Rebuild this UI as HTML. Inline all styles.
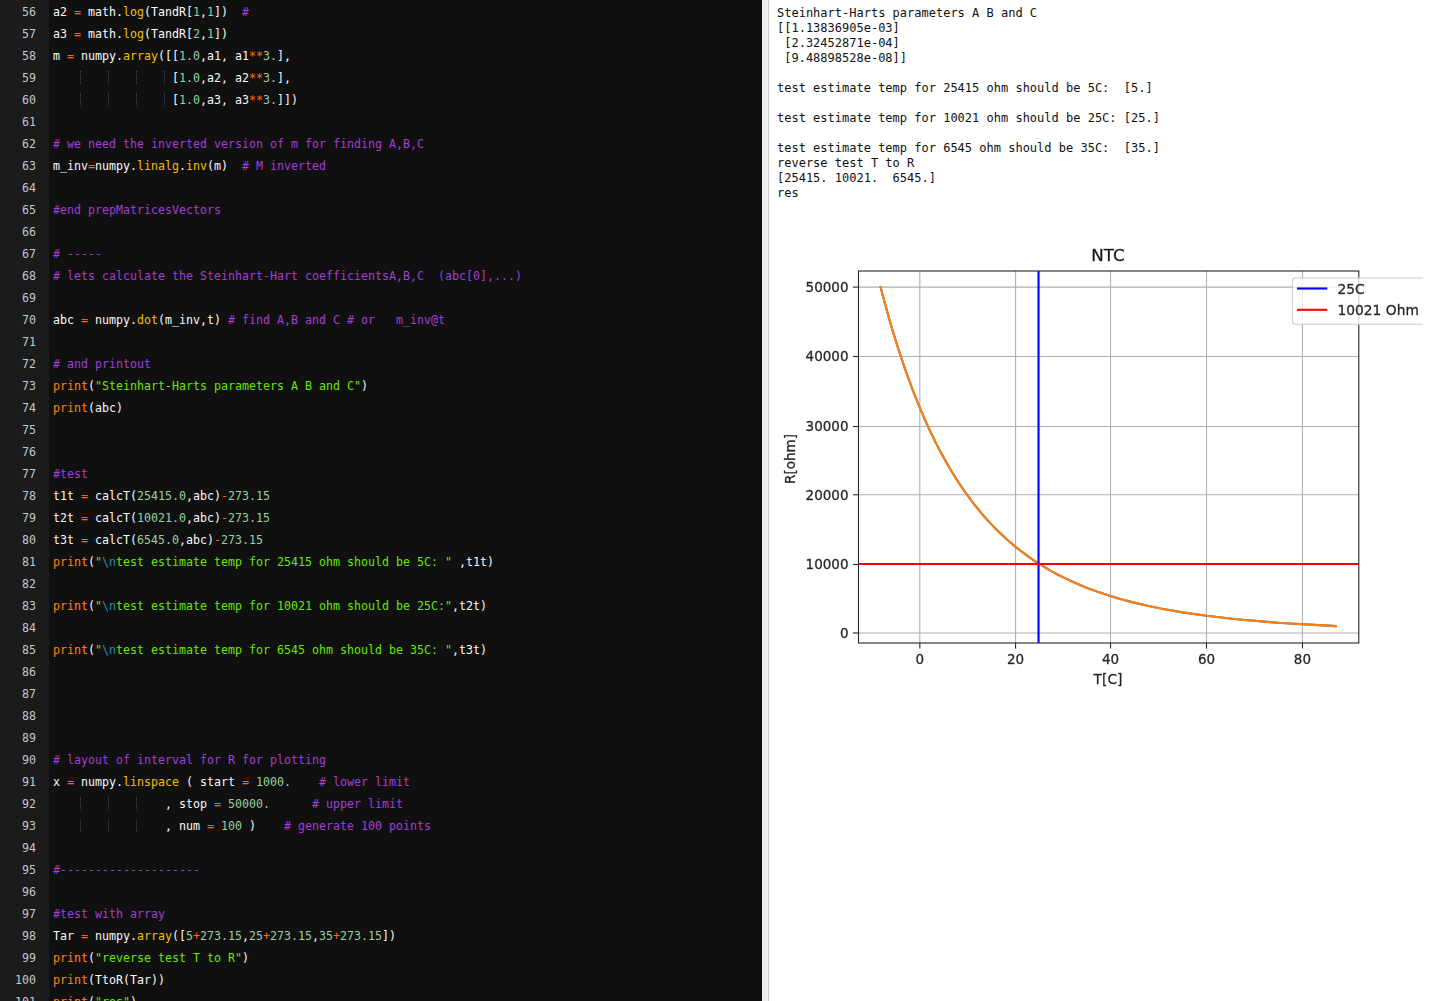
<!DOCTYPE html>
<html lang="en"><head><meta charset="utf-8"><title>NTC</title>
<style>
html,body{margin:0;padding:0;}
body{width:1436px;height:1001px;overflow:hidden;position:relative;background:#fff;}
#left{position:absolute;left:0;top:0;width:762px;height:1001px;background:#101010;overflow:hidden;}
#gutter{position:absolute;left:0;top:0;width:49px;height:1001px;background:#1b1b1b;}
#code{position:absolute;left:0;top:1px;}
.ln{position:relative;height:22px;line-height:22px;white-space:pre;color:#fafafa;}
.no{position:absolute;left:0;top:0;width:40.2px;text-align:right;color:#c6c6c6;font:13px/22px "DejaVu Sans Mono","Liberation Mono",monospace;transform:scaleX(0.8945);transform-origin:0 0;}
.tx{position:absolute;left:53px;top:0;font:13px/22px "DejaVu Sans Mono","Liberation Mono",monospace;transform:scaleX(0.8945);transform-origin:0 0;}

.g{position:absolute;top:4px;width:1px;height:13px;background:repeating-linear-gradient(to bottom,#46445c 0,#46445c 1px,transparent 1px,transparent 2px);}
.c{color:#a23fd6;} .s{color:#6ae60e;} .e{color:#2f8fa3;} .m{color:#f0c206;} .k{color:#ff8414;} .n{color:#98cfa0;} .o{color:#ff6a00;}
#split{position:absolute;left:762px;top:0;width:6px;height:1001px;background:#efefef;border-right:1px solid #cfcfcf;}
#out{position:absolute;left:777px;top:6px;margin:0;font:12px/15px "DejaVu Sans Mono","Liberation Mono",monospace;color:#111;white-space:pre;}
.plot{position:absolute;left:769px;top:0;will-change:transform;}
.plot text{stroke:#262626;stroke-width:.35px;stroke-opacity:.8;}
</style></head><body>
<div id="left"><div id="gutter"></div><div id="code">
<div class="ln"><span class="no">56</span><span class="tx">a2 <span class="o">=</span> math.<span class="m">log</span>(TandR[<span class="n">1</span>,<span class="n">1</span>])  <span class="c">#</span></span></div>
<div class="ln"><span class="no">57</span><span class="tx">a3 <span class="o">=</span> math.<span class="m">log</span>(TandR[<span class="n">2</span>,<span class="n">1</span>])</span></div>
<div class="ln"><span class="no">58</span><span class="tx">m <span class="o">=</span> numpy.<span class="m">array</span>([[<span class="n">1.0</span>,a1, a1<span class="o">**</span><span class="n">3.</span>],</span></div>
<div class="ln"><span class="no">59</span><i class="g" style="left:80px"></i><i class="g" style="left:108px"></i><i class="g" style="left:136px"></i><i class="g" style="left:164px"></i><span class="tx">                 [<span class="n">1.0</span>,a2, a2<span class="o">**</span><span class="n">3.</span>],</span></div>
<div class="ln"><span class="no">60</span><i class="g" style="left:80px"></i><i class="g" style="left:108px"></i><i class="g" style="left:136px"></i><i class="g" style="left:164px"></i><span class="tx">                 [<span class="n">1.0</span>,a3, a3<span class="o">**</span><span class="n">3.</span>]])</span></div>
<div class="ln"><span class="no">61</span><span class="tx"></span></div>
<div class="ln"><span class="no">62</span><span class="tx"><span class="c"># we need the inverted version of m for finding A,B,C</span></span></div>
<div class="ln"><span class="no">63</span><span class="tx">m_inv<span class="o">=</span>numpy.<span class="m">linalg</span>.<span class="m">inv</span>(m)  <span class="c"># M inverted</span></span></div>
<div class="ln"><span class="no">64</span><span class="tx"></span></div>
<div class="ln"><span class="no">65</span><span class="tx"><span class="c">#end prepMatricesVectors</span></span></div>
<div class="ln"><span class="no">66</span><span class="tx"></span></div>
<div class="ln"><span class="no">67</span><span class="tx"><span class="c"># -----</span></span></div>
<div class="ln"><span class="no">68</span><span class="tx"><span class="c"># lets calculate the Steinhart-Hart coefficientsA,B,C  (abc[0],...)</span></span></div>
<div class="ln"><span class="no">69</span><span class="tx"></span></div>
<div class="ln"><span class="no">70</span><span class="tx">abc <span class="o">=</span> numpy.<span class="m">dot</span>(m_inv,t) <span class="c"># find A,B and C # or   m_inv@t</span></span></div>
<div class="ln"><span class="no">71</span><span class="tx"></span></div>
<div class="ln"><span class="no">72</span><span class="tx"><span class="c"># and printout</span></span></div>
<div class="ln"><span class="no">73</span><span class="tx"><span class="k">print</span>(<span class="s">"Steinhart-Harts parameters A B and C"</span>)</span></div>
<div class="ln"><span class="no">74</span><span class="tx"><span class="k">print</span>(abc)</span></div>
<div class="ln"><span class="no">75</span><span class="tx"></span></div>
<div class="ln"><span class="no">76</span><span class="tx"></span></div>
<div class="ln"><span class="no">77</span><span class="tx"><span class="c">#test</span></span></div>
<div class="ln"><span class="no">78</span><span class="tx">t1t <span class="o">=</span> calcT(<span class="n">25415.0</span>,abc)<span class="o">-</span><span class="n">273.15</span></span></div>
<div class="ln"><span class="no">79</span><span class="tx">t2t <span class="o">=</span> calcT(<span class="n">10021.0</span>,abc)<span class="o">-</span><span class="n">273.15</span></span></div>
<div class="ln"><span class="no">80</span><span class="tx">t3t <span class="o">=</span> calcT(<span class="n">6545.0</span>,abc)<span class="o">-</span><span class="n">273.15</span></span></div>
<div class="ln"><span class="no">81</span><span class="tx"><span class="k">print</span>(<span class="s">"<span class="e">\n</span>test estimate temp for 25415 ohm should be 5C: "</span> ,t1t)</span></div>
<div class="ln"><span class="no">82</span><span class="tx"></span></div>
<div class="ln"><span class="no">83</span><span class="tx"><span class="k">print</span>(<span class="s">"<span class="e">\n</span>test estimate temp for 10021 ohm should be 25C:"</span>,t2t)</span></div>
<div class="ln"><span class="no">84</span><span class="tx"></span></div>
<div class="ln"><span class="no">85</span><span class="tx"><span class="k">print</span>(<span class="s">"<span class="e">\n</span>test estimate temp for 6545 ohm should be 35C: "</span>,t3t)</span></div>
<div class="ln"><span class="no">86</span><span class="tx"></span></div>
<div class="ln"><span class="no">87</span><span class="tx"></span></div>
<div class="ln"><span class="no">88</span><span class="tx"></span></div>
<div class="ln"><span class="no">89</span><span class="tx"></span></div>
<div class="ln"><span class="no">90</span><span class="tx"><span class="c"># layout of interval for R for plotting</span></span></div>
<div class="ln"><span class="no">91</span><span class="tx">x <span class="o">=</span> numpy.<span class="m">linspace</span> ( start <span class="o">=</span> <span class="n">1000.</span>    <span class="c"># lower limit</span></span></div>
<div class="ln"><span class="no">92</span><i class="g" style="left:80px"></i><i class="g" style="left:108px"></i><i class="g" style="left:136px"></i><span class="tx">                , stop <span class="o">=</span> <span class="n">50000.</span>      <span class="c"># upper limit</span></span></div>
<div class="ln"><span class="no">93</span><i class="g" style="left:80px"></i><i class="g" style="left:108px"></i><i class="g" style="left:136px"></i><span class="tx">                , num <span class="o">=</span> <span class="n">100</span> )    <span class="c"># generate 100 points</span></span></div>
<div class="ln"><span class="no">94</span><span class="tx"></span></div>
<div class="ln"><span class="no">95</span><span class="tx"><span class="c">#--------------------</span></span></div>
<div class="ln"><span class="no">96</span><span class="tx"></span></div>
<div class="ln"><span class="no">97</span><span class="tx"><span class="c">#test with array</span></span></div>
<div class="ln"><span class="no">98</span><span class="tx">Tar <span class="o">=</span> numpy.<span class="m">array</span>([<span class="n">5</span><span class="o">+</span><span class="n">273.15</span>,<span class="n">25</span><span class="o">+</span><span class="n">273.15</span>,<span class="n">35</span><span class="o">+</span><span class="n">273.15</span>])</span></div>
<div class="ln"><span class="no">99</span><span class="tx"><span class="k">print</span>(<span class="s">"reverse test T to R"</span>)</span></div>
<div class="ln"><span class="no">100</span><span class="tx"><span class="k">print</span>(TtoR(Tar))</span></div>
<div class="ln"><span class="no">101</span><span class="tx"><span class="k">print</span>(<span class="s">"res"</span>)</span></div>
</div></div>
<div id="split"></div>
<pre id="out">Steinhart-Harts parameters A B and C
[[1.13836905e-03]
 [2.32452871e-04]
 [9.48898528e-08]]

test estimate temp for 25415 ohm should be 5C:  [5.]

test estimate temp for 10021 ohm should be 25C: [25.]

test estimate temp for 6545 ohm should be 35C:  [35.]
reverse test T to R
[25415. 10021.  6545.]
res</pre>
<svg class="plot" width="667" height="1001" viewBox="769 0 667 1001">
<g font-family="'DejaVu Sans', 'Liberation Sans', sans-serif" fill="#262626">
<g stroke="#b0b0b0" stroke-width="1.1"><line x1="919.83" x2="919.83" y1="271.0" y2="643.0"/><line x1="1015.58" x2="1015.58" y1="271.0" y2="643.0"/><line x1="1110.52" x2="1110.52" y1="271.0" y2="643.0"/><line x1="1206.49" x2="1206.49" y1="271.0" y2="643.0"/><line x1="1302.46" x2="1302.46" y1="271.0" y2="643.0"/><line x1="858.5" x2="1358.8" y1="633.00" y2="633.00"/><line x1="858.5" x2="1358.8" y1="564.50" y2="564.50"/><line x1="858.5" x2="1358.8" y1="494.75" y2="494.75"/><line x1="858.5" x2="1358.8" y1="426.50" y2="426.50"/><line x1="858.5" x2="1358.8" y1="356.50" y2="356.50"/><line x1="858.5" x2="1358.8" y1="287.10" y2="287.10"/></g>
<path d="M1335.83 626.08 L1276.42 622.66 L1236.37 619.23 L1206.44 615.81 L1182.70 612.39 L1163.10 608.96 L1146.46 605.54 L1132.04 602.11 L1119.34 598.69 L1108.01 595.27 L1097.79 591.84 L1088.50 588.42 L1079.99 584.99 L1072.14 581.57 L1064.86 578.15 L1058.08 574.72 L1051.74 571.30 L1045.78 567.87 L1040.17 564.45 L1034.87 561.02 L1029.85 557.60 L1025.08 554.18 L1020.54 550.75 L1016.20 547.33 L1012.06 543.90 L1008.10 540.48 L1004.29 537.06 L1000.64 533.63 L997.13 530.21 L993.74 526.78 L990.48 523.36 L987.33 519.94 L984.29 516.51 L981.34 513.09 L978.49 509.66 L975.73 506.24 L973.04 502.82 L970.44 499.39 L967.91 495.97 L965.45 492.54 L963.06 489.12 L960.73 485.70 L958.47 482.27 L956.25 478.85 L954.10 475.42 L951.99 472.00 L949.94 468.58 L947.93 465.15 L945.97 461.73 L944.05 458.30 L942.17 454.88 L940.34 451.45 L938.54 448.03 L936.78 444.61 L935.05 441.18 L933.36 437.76 L931.70 434.33 L930.08 430.91 L928.48 427.49 L926.92 424.06 L925.38 420.64 L923.87 417.21 L922.38 413.79 L920.93 410.37 L919.49 406.94 L918.09 403.52 L916.70 400.09 L915.34 396.67 L914.00 393.25 L912.68 389.82 L911.38 386.40 L910.10 382.97 L908.84 379.55 L907.60 376.13 L906.38 372.70 L905.18 369.28 L903.99 365.85 L902.82 362.43 L901.67 359.01 L900.53 355.58 L899.41 352.16 L898.30 348.73 L897.21 345.31 L896.13 341.88 L895.07 338.46 L894.02 335.04 L892.98 331.61 L891.96 328.19 L890.95 324.76 L889.95 321.34 L888.97 317.92 L887.99 314.49 L887.03 311.07 L886.08 307.64 L885.14 304.22 L884.21 300.80 L883.30 297.37 L882.39 293.95 L881.49 290.52 L880.60 287.10" fill="none" stroke="#1f77b4" stroke-width="2.1" stroke-linecap="square"/>
<path d="M1335.83 626.08 L1276.42 622.66 L1236.37 619.23 L1206.44 615.81 L1182.70 612.39 L1163.10 608.96 L1146.46 605.54 L1132.04 602.11 L1119.34 598.69 L1108.01 595.27 L1097.79 591.84 L1088.50 588.42 L1079.99 584.99 L1072.14 581.57 L1064.86 578.15 L1058.08 574.72 L1051.74 571.30 L1045.78 567.87 L1040.17 564.45 L1034.87 561.02 L1029.85 557.60 L1025.08 554.18 L1020.54 550.75 L1016.20 547.33 L1012.06 543.90 L1008.10 540.48 L1004.29 537.06 L1000.64 533.63 L997.13 530.21 L993.74 526.78 L990.48 523.36 L987.33 519.94 L984.29 516.51 L981.34 513.09 L978.49 509.66 L975.73 506.24 L973.04 502.82 L970.44 499.39 L967.91 495.97 L965.45 492.54 L963.06 489.12 L960.73 485.70 L958.47 482.27 L956.25 478.85 L954.10 475.42 L951.99 472.00 L949.94 468.58 L947.93 465.15 L945.97 461.73 L944.05 458.30 L942.17 454.88 L940.34 451.45 L938.54 448.03 L936.78 444.61 L935.05 441.18 L933.36 437.76 L931.70 434.33 L930.08 430.91 L928.48 427.49 L926.92 424.06 L925.38 420.64 L923.87 417.21 L922.38 413.79 L920.93 410.37 L919.49 406.94 L918.09 403.52 L916.70 400.09 L915.34 396.67 L914.00 393.25 L912.68 389.82 L911.38 386.40 L910.10 382.97 L908.84 379.55 L907.60 376.13 L906.38 372.70 L905.18 369.28 L903.99 365.85 L902.82 362.43 L901.67 359.01 L900.53 355.58 L899.41 352.16 L898.30 348.73 L897.21 345.31 L896.13 341.88 L895.07 338.46 L894.02 335.04 L892.98 331.61 L891.96 328.19 L890.95 324.76 L889.95 321.34 L888.97 317.92 L887.99 314.49 L887.03 311.07 L886.08 307.64 L885.14 304.22 L884.21 300.80 L883.30 297.37 L882.39 293.95 L881.49 290.52 L880.60 287.10" fill="none" stroke="#ff7f0e" stroke-width="2.1" stroke-linecap="square"/>
<line x1="1038.55" x2="1038.55" y1="271.0" y2="643.0" stroke="#0000ff" stroke-width="2.1"/>
<line x1="858.5" x2="1358.8" y1="563.95" y2="563.95" stroke="#ff0000" stroke-width="2.1"/>
<g stroke="#262626" stroke-width="1.1"><line x1="919.83" x2="919.83" y1="643.0" y2="648.5"/><line x1="1015.58" x2="1015.58" y1="643.0" y2="648.5"/><line x1="1110.52" x2="1110.52" y1="643.0" y2="648.5"/><line x1="1206.49" x2="1206.49" y1="643.0" y2="648.5"/><line x1="1302.46" x2="1302.46" y1="643.0" y2="648.5"/><line x1="853.0" x2="858.5" y1="633.00" y2="633.00"/><line x1="853.0" x2="858.5" y1="564.50" y2="564.50"/><line x1="853.0" x2="858.5" y1="494.75" y2="494.75"/><line x1="853.0" x2="858.5" y1="426.50" y2="426.50"/><line x1="853.0" x2="858.5" y1="356.50" y2="356.50"/><line x1="853.0" x2="858.5" y1="287.10" y2="287.10"/></g>
<rect x="858.5" y="271.0" width="500.30" height="372.00" fill="none" stroke="#262626" stroke-width="1.1"/>
<text x="919.83" y="664" font-size="13.5" text-anchor="middle">0</text>
<text x="1015.58" y="664" font-size="13.5" text-anchor="middle">20</text>
<text x="1110.52" y="664" font-size="13.5" text-anchor="middle">40</text>
<text x="1206.49" y="664" font-size="13.5" text-anchor="middle">60</text>
<text x="1302.46" y="664" font-size="13.5" text-anchor="middle">80</text>
<text x="848.5" y="638.10" font-size="13.5" text-anchor="end">0</text>
<text x="848.5" y="568.92" font-size="13.5" text-anchor="end">10000</text>
<text x="848.5" y="499.74" font-size="13.5" text-anchor="end">20000</text>
<text x="848.5" y="430.56" font-size="13.5" text-anchor="end">30000</text>
<text x="848.5" y="361.38" font-size="13.5" text-anchor="end">40000</text>
<text x="848.5" y="292.20" font-size="13.5" text-anchor="end">50000</text>
<text x="1108" y="684" font-size="13.8" text-anchor="middle">T[C]</text>
<text transform="translate(795 459) rotate(-90)" font-size="13.5" text-anchor="middle">R[ohm]</text>
<text x="1108" y="260.7" font-size="16.7" fill="#111" text-anchor="middle">NTC</text>
<clipPath id="lc"><rect x="1280" y="270" width="143" height="70"/></clipPath>
<g clip-path="url(#lc)"><rect x="1292.5" y="278" width="160" height="46.2" rx="3" ry="3" fill="#ffffff" fill-opacity="0.8" stroke="#cccccc" stroke-width="1.1"/></g>
<line x1="1297" x2="1327.3" y1="288.5" y2="288.5" stroke="#0000ff" stroke-width="2.1"/>
<line x1="1297" x2="1327.3" y1="309.8" y2="309.8" stroke="#ff0000" stroke-width="2.1"/>
<text x="1337.5" y="293.6" font-size="13.8">25C</text>
<text x="1337.5" y="315" font-size="13.8">10021 Ohm</text>
</g></svg>
</body></html>
